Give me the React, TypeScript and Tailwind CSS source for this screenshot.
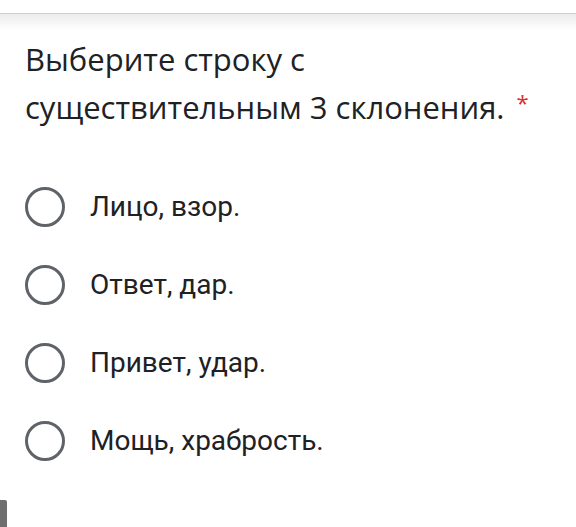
import React from 'react';

const options = ['Лицо, взор.', 'Ответ, дар.', 'Привет, удар.', 'Мощь, храбрость.'];

function Radio() {
  return <div className="h-[40px] w-[40px] shrink-0 rounded-full border-[3.5px] border-[#5f6368]" />;
}

export default function App() {
  return (
    <div className="relative h-[527px] w-[576px] overflow-hidden bg-white">
      {/* top edge of the card */}
      <div className="h-[13px] bg-white" />
      <div className="h-[1px] bg-[#cfcfcf]" />
      <div className="h-[16px] bg-gradient-to-b from-[#ececec] to-white" />

      <div className="px-[25px] pt-[5px]">
        <h2
          className="text-[31px] leading-[48px] text-[#202124]"
          style={{ fontFamily: '"Open Sans", "Noto Sans", sans-serif' }}
        >
          Выберите строку с<br />
          существительным 3 склонения.
          <span className="relative top-[-8px] ml-[12px] text-[22px] text-[#d93025]">*</span>
        </h2>

        <div className="mt-[53px] flex flex-col gap-[38px]">
          {options.map((o) => (
            <div key={o} className="flex items-center gap-[25px]">
              <Radio />
              <span
                className="text-[28px] leading-[40px] text-[#202124]"
                style={{ fontFamily: 'Roboto, "Noto Sans", sans-serif' }}
              >
                {o}
              </span>
            </div>
          ))}
        </div>
      </div>

      <div className="absolute bottom-0 left-0 h-[27px] w-[7px] rounded-tr-[2px] bg-[#6e6e6e]" />
    </div>
  );
}
